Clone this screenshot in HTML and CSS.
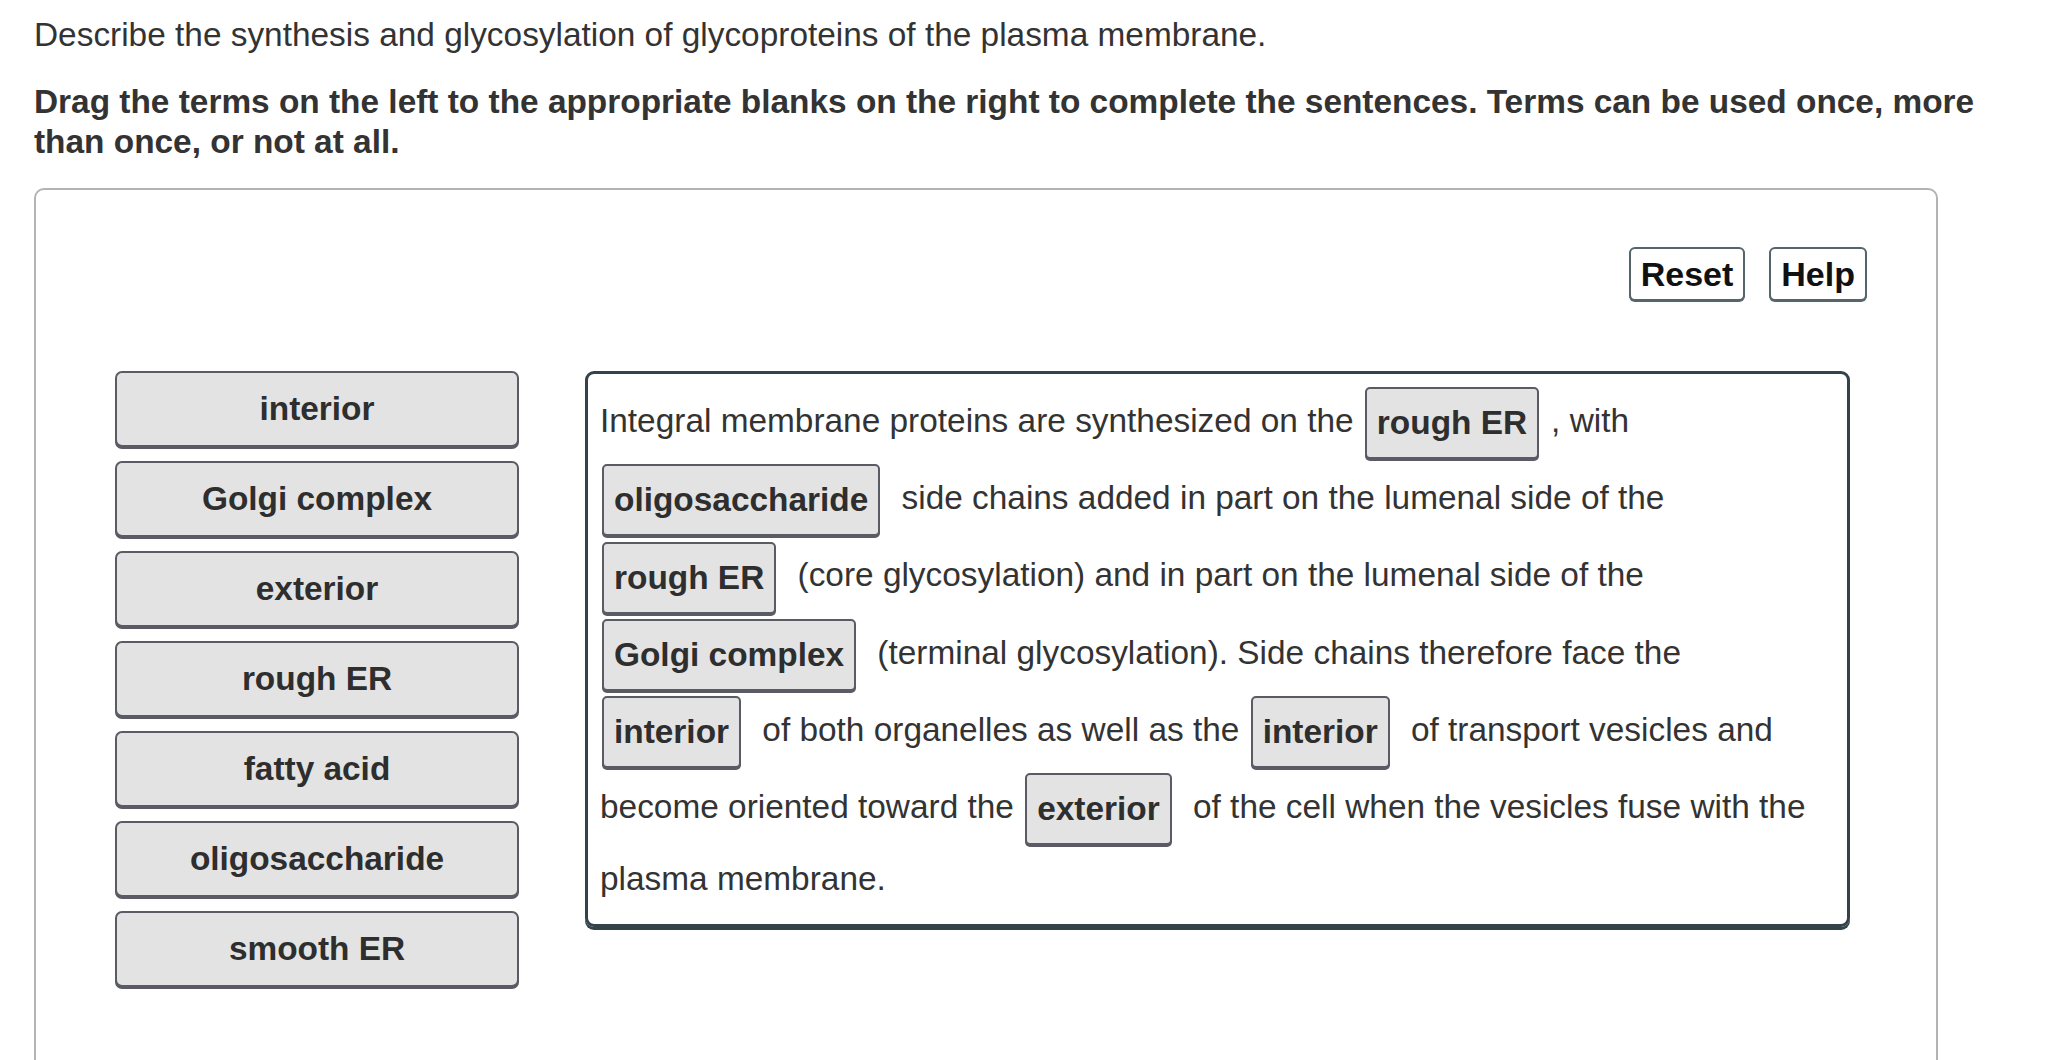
FILE: index.html
```html
<!DOCTYPE html>
<html lang="en">
<head>
    <meta charset="UTF-8">
    <title>Drag and drop - glycoproteins</title>
    <link rel="stylesheet" href="styles.css">
</head>
<body>
    <p class="question">Describe the synthesis and glycosylation of glycoproteins of the plasma membrane.</p>
    <p class="instructions">Drag the terms on the left to the appropriate blanks on the right to complete the sentences. Terms can be used once, more than once, or not at all.</p>

    <div class="activity">
        <div class="toolbar">
            <button class="tool-button">Reset</button>
            <button class="tool-button">Help</button>
        </div>

        <div class="workspace">
            <div class="term-bank">
                <div class="term">interior</div>
                <div class="term">Golgi complex</div>
                <div class="term">exterior</div>
                <div class="term">rough ER</div>
                <div class="term">fatty acid</div>
                <div class="term">oligosaccharide</div>
                <div class="term">smooth ER</div>
            </div>

            <!-- line breaks follow the original layout -->
            <div class="sentences">
                Integral membrane proteins are synthesized on the <span class="blank">rough ER</span>, with<br>
                <span class="blank">oligosaccharide</span> side chains added in part on the lumenal side of the<br>
                <span class="blank">rough ER</span> (core glycosylation) and in part on the lumenal side of the<br>
                <span class="blank">Golgi complex</span> (terminal glycosylation). Side chains therefore face the<br>
                <span class="blank">interior</span> of both organelles as well as the <span class="blank">interior</span> of transport vesicles and<br>
                become oriented toward the <span class="blank">exterior</span> of the cell when the vesicles fuse with the
                <div class="last-line">plasma membrane.</div>
            </div>
        </div>
    </div>
</body>
</html>
```

FILE: styles.css
```css
body {
    margin: 0;
    padding: 15px 0 0 34px;
    font-family: "Liberation Sans", Arial, sans-serif;
    font-size: 33.4px;
    line-height: 40px;
    color: #333;
    background-color: white;
}
.question {
    margin: 0 0 27px 0;
}
.instructions {
    margin: 0 0 26px 0;
    font-weight: bold;
    width: 1980px;
}
.activity {
    width: 1752px;
    border: 2px solid #b3b3b3;
    border-radius: 10px;
    padding: 57px 69px 200px 79px;
}
.toolbar {
    display: flex;
    justify-content: flex-end;
    gap: 24px;
    margin-bottom: 70px;
}
.tool-button {
    height: 54px;
    padding: 0 10px;
    font-family: "Liberation Sans", Arial, sans-serif;
    font-size: 34px;
    font-weight: bold;
    color: #111;
    background-color: white;
    border: 2px solid #56656c;
    border-radius: 6px;
    box-shadow: 0 1px 0 #56656c;
}
.workspace {
    display: flex;
    align-items: flex-start;
    gap: 66px;
}
.term-bank {
    display: flex;
    flex-direction: column;
    gap: 14px;
    width: 404px;
}
.term {
    height: 72px;
    line-height: 72px;
    text-align: center;
    font-weight: bold;
    color: #2e2e2e;
    background-color: #e3e3e3;
    border: 2px solid #5a5b64;
    border-radius: 7px;
    box-shadow: 0 2px 0 #5a5b64;
}
.sentences {
    width: 1235px;
    padding: 8px 12px 12px 12px;
    line-height: 77px;
    white-space: nowrap;
    border: 3px solid #34434a;
    border-radius: 9px;
    box-shadow: 0 3px 0 #34434a;
}
.last-line {
    line-height: 67px;
}
.blank {
    display: inline-block;
    height: 68px;
    line-height: 68px;
    padding: 0 10px;
    margin: 0 12px 0 2px;
    vertical-align: middle;
    font-weight: bold;
    color: #2e2e2e;
    background-color: #e3e3e3;
    border: 2px solid #5a5b64;
    border-radius: 5px;
    box-shadow: 0 2px 0 #5a5b64;
}
```
